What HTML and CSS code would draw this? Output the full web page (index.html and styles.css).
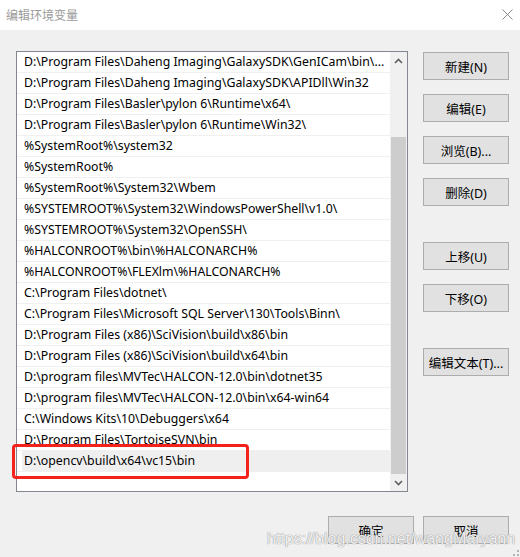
FILE: index.html
```html
<!DOCTYPE html>
<html lang="zh-CN">
<head>
<meta charset="utf-8">
<title>编辑环境变量</title>
<link rel="stylesheet" href="styles.css">
</head>
<body>
<div class="window">
  <div class="titlebar">
    <span class="title">编辑环境变量</span>
    <svg class="close" width="11" height="11" viewBox="0 0 11 11"><path d="M0.5 0.5 L10.5 10.5 M10.5 0.5 L0.5 10.5" stroke="#8a8a8a" stroke-width="1" fill="none"/></svg>
  </div>
  <div class="body">
    <div class="main">
      <div class="listbox">
        <div class="rows">
          <div class="row">D:\Program Files\Daheng Imaging\GalaxySDK\GenICam\bin\...</div>
          <div class="row">D:\Program Files\Daheng Imaging\GalaxySDK\APIDll\Win32</div>
          <div class="row">D:\Program Files\Basler\pylon 6\Runtime\x64\</div>
          <div class="row">D:\Program Files\Basler\pylon 6\Runtime\Win32\</div>
          <div class="row">%SystemRoot%\system32</div>
          <div class="row">%SystemRoot%</div>
          <div class="row">%SystemRoot%\System32\Wbem</div>
          <div class="row">%SYSTEMROOT%\System32\WindowsPowerShell\v1.0\</div>
          <div class="row">%SYSTEMROOT%\System32\OpenSSH\</div>
          <div class="row">%HALCONROOT%\bin\%HALCONARCH%</div>
          <div class="row">%HALCONROOT%\FLEXlm\%HALCONARCH%</div>
          <div class="row">C:\Program Files\dotnet\</div>
          <div class="row">C:\Program Files\Microsoft SQL Server\130\Tools\Binn\</div>
          <div class="row">D:\Program Files (x86)\SciVision\build\x86\bin</div>
          <div class="row">D:\Program Files (x86)\SciVision\build\x64\bin</div>
          <div class="row">D:\program files\MVTec\HALCON-12.0\bin\dotnet35</div>
          <div class="row">D:\program files\MVTec\HALCON-12.0\bin\x64-win64</div>
          <div class="row">C:\Windows Kits\10\Debuggers\x64</div>
          <div class="row">D:\Program Files\TortoiseSVN\bin</div>
          <div class="row selected">D:\opencv\build\x64\vc15\bin</div>
        </div>
        <div class="scrollbar">
          <div class="sb-btn">
            <svg width="9" height="6" viewBox="0 0 9 6"><path d="M1 5 L4.5 1.5 L8 5" stroke="#606060" stroke-width="1.6" fill="none"/></svg>
          </div>
          <div class="sb-track"><div class="sb-thumb"></div></div>
          <div class="sb-btn">
            <svg width="9" height="6" viewBox="0 0 9 6"><path d="M1 1 L4.5 4.5 L8 1" stroke="#606060" stroke-width="1.6" fill="none"/></svg>
          </div>
        </div>
      </div>
      <div class="buttons">
        <div class="btn">新建(N)</div>
        <div class="btn">编辑(E)</div>
        <div class="btn">浏览(B)...</div>
        <div class="btn">删除(D)</div>
        <div class="btn gap">上移(U)</div>
        <div class="btn">下移(O)</div>
        <div class="btn gap">编辑文本(T)...</div>
      </div>
    </div>
    <div class="footer">
      <div class="btn">确定</div>
      <div class="btn">取消</div>
    </div>
  </div>
  <div class="highlight"></div>
  <div class="watermark">https://blog.csdn.net/wangMaryann</div>
  <svg class="grip" width="6" height="6" viewBox="0 0 6 6">
    <rect x="4" y="0" width="2" height="2" fill="#b4b4b4"/>
    <rect x="0" y="4" width="2" height="2" fill="#b4b4b4"/>
    <rect x="4" y="4" width="2" height="2" fill="#b4b4b4"/>
  </svg>
</div>
</body>
</html>
```
FILE: styles.css
```css
html, body {
  margin: 0;
  padding: 0;
}
body {
  width: 520px;
  height: 557px;
  overflow: hidden;
  font-family: "Noto Sans", "Noto Sans CJK SC", sans-serif;
}
.window {
  position: relative;
  width: 520px;
  height: 557px;
  background: #f0f0f0;
  display: flex;
  flex-direction: column;
}
.titlebar {
  height: 30px;
  background: #ffffff;
  display: flex;
  align-items: center;
  justify-content: space-between;
  padding: 0 7px 0 6px;
  box-sizing: border-box;
}
.title {
  font-family: "Noto Sans CJK SC", sans-serif;
  font-size: 12px;
  color: #9a9a9a;
  line-height: 14px;
}
.close {
  display: block;
  margin-top: -2px;
}
.body {
  flex: 1;
  display: flex;
  flex-direction: column;
  padding: 21px 11px 0 16px;
}
.main {
  display: flex;
  gap: 15px;
}
.listbox {
  width: 392px;
  height: 441px;
  box-sizing: border-box;
  border: 1px solid #828790;
  background: #ffffff;
  display: flex;
}
.rows {
  flex: 1;
  display: flex;
  flex-direction: column;
}
.row {
  height: 21px;
  box-sizing: border-box;
  border-bottom: 1px solid #f0f0f0;
  padding-left: 7px;
  font-size: 12.3px;
  line-height: 20px;
  color: #000;
  white-space: nowrap;
  overflow: hidden;
}
.row.selected {
  background: linear-gradient(to right, #ffffff 5px, #efefef 5px);
}
.scrollbar {
  width: 17px;
  display: flex;
  flex-direction: column;
  background: #f0f0f0;
}
.sb-btn {
  height: 17px;
  display: flex;
  align-items: center;
  justify-content: center;
}
.sb-track {
  flex: 1;
  padding-top: 68px;
  display: flex;
  flex-direction: column;
}
.sb-thumb {
  flex: 1;
  margin: 0 1px;
  background: #cdcdcd;
}
.buttons {
  display: flex;
  flex-direction: column;
  gap: 14px;
  padding-top: 1px;
}
.buttons .gap {
  margin-top: 22px;
}
.btn {
  width: 86px;
  height: 28px;
  box-sizing: border-box;
  border: 1px solid #adadad;
  background: #e1e1e1;
  font-family: "Noto Sans", "Noto Sans CJK SC", sans-serif;
  font-size: 12.5px;
  color: #000;
  display: flex;
  align-items: center;
  justify-content: center;
}
.footer {
  display: flex;
  justify-content: flex-end;
  gap: 9px;
  margin-top: 24px;
}
.highlight {
  position: absolute;
  left: 12px;
  top: 444px;
  width: 237px;
  height: 35px;
  box-sizing: border-box;
  border: 3px solid #f5211b;
  border-radius: 4px;
}
.watermark {
  position: absolute;
  left: 267px;
  top: 530px;
  font-family: "Liberation Sans", sans-serif;
  font-size: 16px;
  color: rgba(255, 255, 255, 0.85);
  text-shadow: 0 0 1px #9a9a9a, 0 0 1px #9a9a9a;
  white-space: nowrap;
}
.grip {
  position: absolute;
  right: 1px;
  bottom: 1px;
}
```
